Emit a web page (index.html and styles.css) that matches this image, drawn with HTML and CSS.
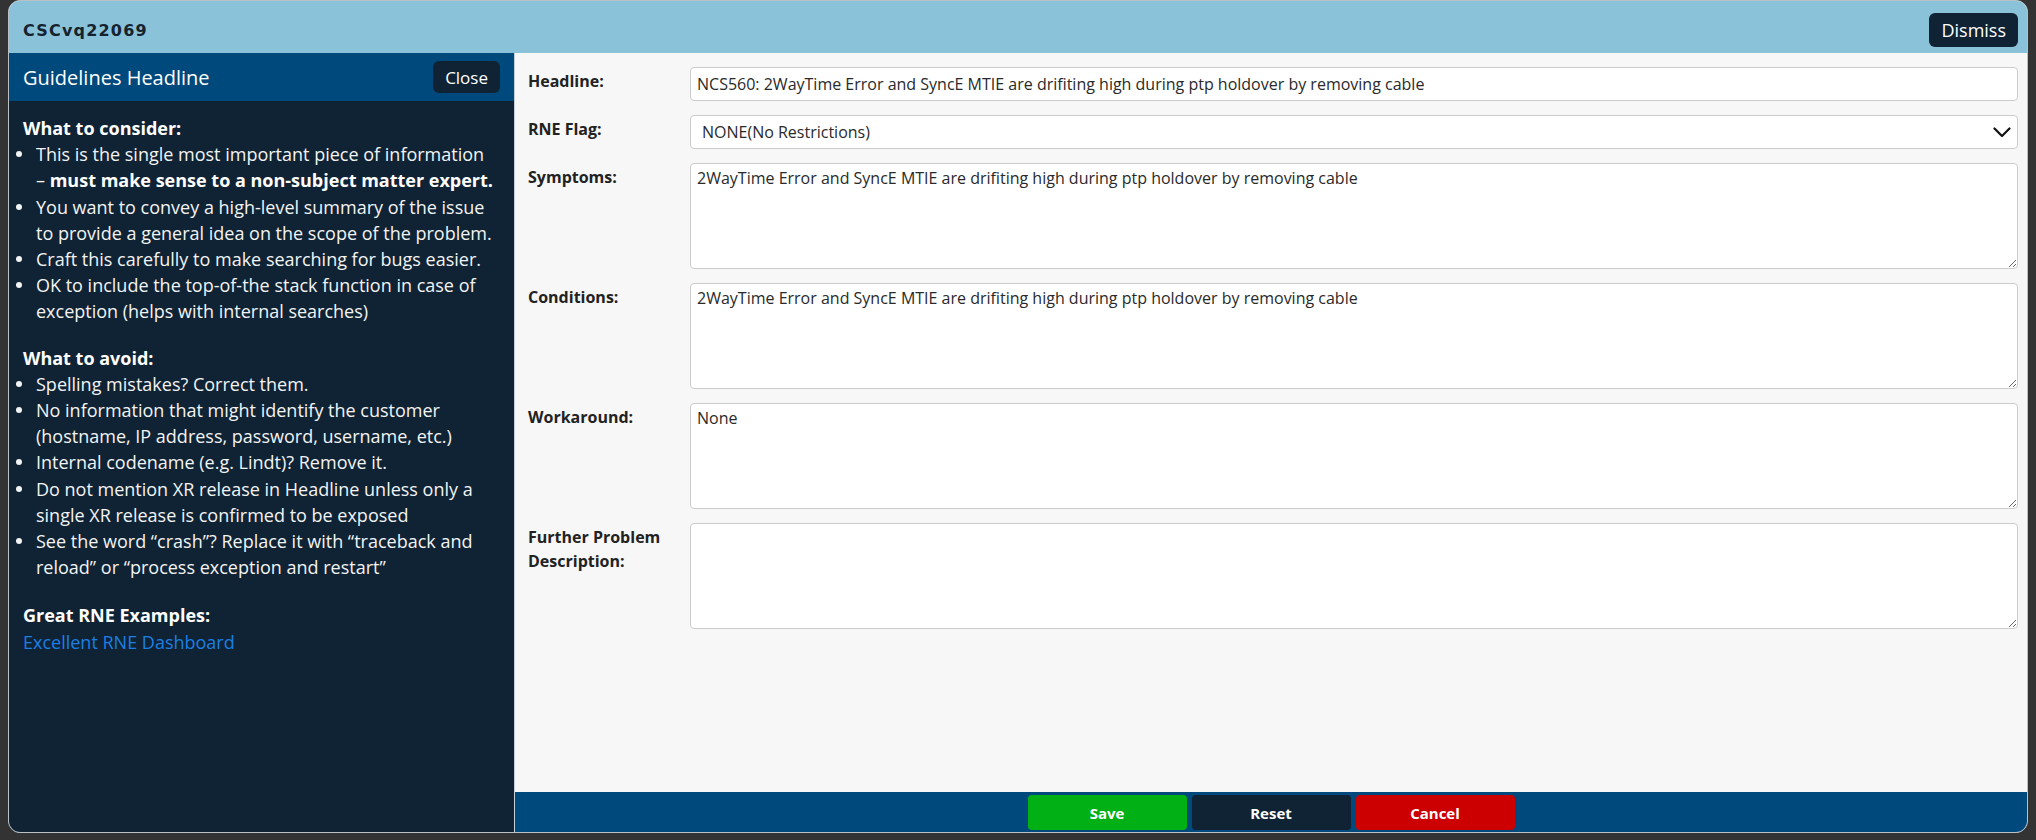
FILE: index.html
```html
<!DOCTYPE html>
<html lang="en">
<head>
<meta charset="utf-8">
<title>CSCvq22069</title>
<link rel="stylesheet" href="styles.css">
</head>
<body>
<div class="modal">
  <header class="modal-header">
    <span class="modal-title">CSCvq22069</span>
    <button class="btn-dismiss" type="button">Dismiss</button>
  </header>
  <div class="modal-body">
    <aside class="guide">
      <div class="guide-head">
        <span class="guide-title">Guidelines Headline</span>
        <button class="btn-close" type="button">Close</button>
      </div>
      <div class="guide-body">
        <section class="guide-sec">
          <div class="guide-h">What to consider:</div>
          <ul class="guide-list">
            <li><span>This is the single most important piece of information<br>– <b>must make sense to a non-subject matter expert.</b></span></li>
            <li><span>You want to convey a high-level summary of the issue<br>to provide a general idea on the scope of the problem.</span></li>
            <li><span>Craft this carefully to make searching for bugs easier.</span></li>
            <li><span>OK to include the top-of-the stack function in case of<br>exception (helps with internal searches)</span></li>
          </ul>
        </section>
        <section class="guide-sec guide-sec-wide">
          <div class="guide-h">What to avoid:</div>
          <ul class="guide-list">
            <li><span>Spelling mistakes? Correct them.</span></li>
            <li><span>No information that might identify the customer<br>(hostname, IP address, password, username, etc.)</span></li>
            <li><span>Internal codename (e.g. Lindt)? Remove it.</span></li>
            <li><span>Do not mention XR release in Headline unless only a<br>single XR release is confirmed to be exposed</span></li>
            <li><span>See the word “crash”? Replace it with “traceback and<br>reload” or “process exception and restart”</span></li>
          </ul>
        </section>
        <section class="guide-sec">
          <div class="guide-h">Great RNE Examples:</div>
          <a class="guide-link" href="#">Excellent RNE Dashboard</a>
        </section>
      </div>
    </aside>
    <main class="editor">
      <form class="form">
        <label class="f-label" for="f-headline">Headline:</label>
        <input class="f-input" id="f-headline" type="text" value="NCS560: 2WayTime Error and SyncE MTIE are drifiting high during ptp holdover by removing cable">

        <label class="f-label" for="f-flag">RNE Flag:</label>
        <div class="select-wrap">
          <select class="f-select" id="f-flag">
            <option>NONE(No Restrictions)</option>
          </select>
          <svg class="select-chevron" width="18" height="11" viewBox="0 0 18 11" aria-hidden="true"><path d="M1.5 1.5 L9 9 L16.5 1.5" fill="none" stroke="#111" stroke-width="2.2" stroke-linecap="round" stroke-linejoin="round"/></svg>
        </div>

        <label class="f-label" for="f-symptoms">Symptoms:</label>
        <textarea class="f-area" id="f-symptoms">2WayTime Error and SyncE MTIE are drifiting high during ptp holdover by removing cable</textarea>

        <label class="f-label" for="f-conditions">Conditions:</label>
        <textarea class="f-area" id="f-conditions">2WayTime Error and SyncE MTIE are drifiting high during ptp holdover by removing cable</textarea>

        <label class="f-label" for="f-workaround">Workaround:</label>
        <textarea class="f-area" id="f-workaround">None</textarea>

        <label class="f-label" for="f-further">Further Problem Description:</label>
        <textarea class="f-area" id="f-further"></textarea>
      </form>
      <footer class="editor-foot">
        <button class="btn btn-save" type="button">Save</button>
        <button class="btn btn-reset" type="button">Reset</button>
        <button class="btn btn-cancel" type="button">Cancel</button>
      </footer>
    </main>
  </div>
</div>
</body>
</html>
```

FILE: styles.css
```css
html, body {
  height: 840px;
  overflow: hidden;
}

body {
  margin: 0 8px;
  background: #333333;
  font-family: "Open Sans", "Noto Sans", sans-serif;
}

.modal {
  height: 833px;
  box-sizing: border-box;
  border: 1px solid #b9c0c6;
  border-radius: 12px;
  overflow: hidden;
  display: flex;
  flex-direction: column;
  background: #f7f7f7;
}

/* header */
.modal-header {
  flex: none;
  height: 52px;
  box-sizing: border-box;
  padding: 6px 9px 0 14px;
  background: #8ac2d9;
  display: flex;
  align-items: center;
  justify-content: space-between;
}

.modal-title {
  font-family: "DejaVu Sans", sans-serif;
  font-weight: 700;
  font-size: 16px;
  letter-spacing: 1.2px;
  color: #15232e;
}

.btn-dismiss {
  height: 34px;
  padding: 0 12px;
  border: 0;
  border-radius: 6px;
  background: #0f2335;
  color: #ffffff;
  font-family: "Open Sans", sans-serif;
  font-size: 18px;
}

/* body */
.modal-body {
  flex: 1;
  min-height: 0;
  display: flex;
}

/* guidelines */
.guide {
  flex: none;
  width: 505px;
  background: #0f2335;
  color: #f3f3f3;
  display: flex;
  flex-direction: column;
}

.guide-head {
  flex: none;
  height: 48px;
  box-sizing: border-box;
  padding: 0 14px;
  background: #00497c;
  display: flex;
  align-items: center;
  justify-content: space-between;
}

.guide-title {
  font-size: 20px;
  color: #ffffff;
}

.btn-close {
  height: 32px;
  padding: 0 12px;
  border: 0;
  border-radius: 6px;
  background: #0f2335;
  color: #ffffff;
  font-family: "Open Sans", sans-serif;
  font-size: 17px;
}

.guide-body {
  padding: 14px 4px 0 14px;
  font-size: 18px;
  line-height: 26.2px;
  white-space: nowrap;
}

.guide-sec {
  margin-bottom: 20px;
}

.guide-sec-wide {
  margin-bottom: 22px;
}

.guide-h {
  font-weight: 700;
  color: #ffffff;
}

.guide-list {
  list-style: none;
  margin: 0 0 0 -7px;
  padding: 0;
}

.guide-list li {
  display: flex;
}

.guide-list li::before {
  content: "";
  flex: none;
  width: 6px;
  height: 6px;
  margin: 10px 14px 0 0;
  border-radius: 50%;
  background: #f3f3f3;
}

.guide-list b {
  color: #ffffff;
}

.guide-link {
  color: #1b7fe3;
  text-decoration: none;
}

/* editor */
.editor {
  flex: 1;
  min-width: 0;
  border-left: 1px solid #c7cfd6;
  background: #f7f7f7;
  display: flex;
  flex-direction: column;
}

.form {
  flex: 1;
  display: grid;
  grid-template-columns: 150px 1fr;
  column-gap: 12px;
  row-gap: 14px;
  align-content: start;
  padding: 14px 9px 0 13px;
}

.f-label {
  padding-top: 2px;
  font-size: 16px;
  font-weight: 700;
  line-height: 24px;
  color: #222222;
}

.f-input,
.f-select,
.f-area {
  width: 100%;
  box-sizing: border-box;
  margin: 0;
  border: 1px solid #cccccc;
  border-radius: 4px;
  background: #ffffff;
  font-family: "Open Sans", sans-serif;
  font-size: 16px;
  color: #2a2a2a;
  outline: none;
}

.f-input {
  height: 34px;
  padding: 0 6px;
}

.select-wrap {
  position: relative;
}

.f-select {
  height: 34px;
  padding: 0 40px 0 11px;
  appearance: none;
  -webkit-appearance: none;
}

.select-chevron {
  position: absolute;
  right: 7px;
  top: 12px;
  pointer-events: none;
}

.f-area {
  height: 106px;
  padding: 4px 6px;
  line-height: 20px;
  resize: vertical;
  display: block;
}

.editor-foot {
  flex: none;
  height: 40px;
  box-sizing: border-box;
  padding-top: 3px;
  background: #00497c;
  display: flex;
  justify-content: center;
  align-items: flex-start;
  gap: 5px;
}

.btn {
  width: 159px;
  height: 35px;
  border: 0;
  border-radius: 4px;
  color: #ffffff;
  font-family: "Open Sans", sans-serif;
  font-size: 15px;
  font-weight: 700;
}

.btn-save {
  background: #00b015;
}

.btn-reset {
  background: #0f2335;
}

.btn-cancel {
  background: #cc0000;
}
```
